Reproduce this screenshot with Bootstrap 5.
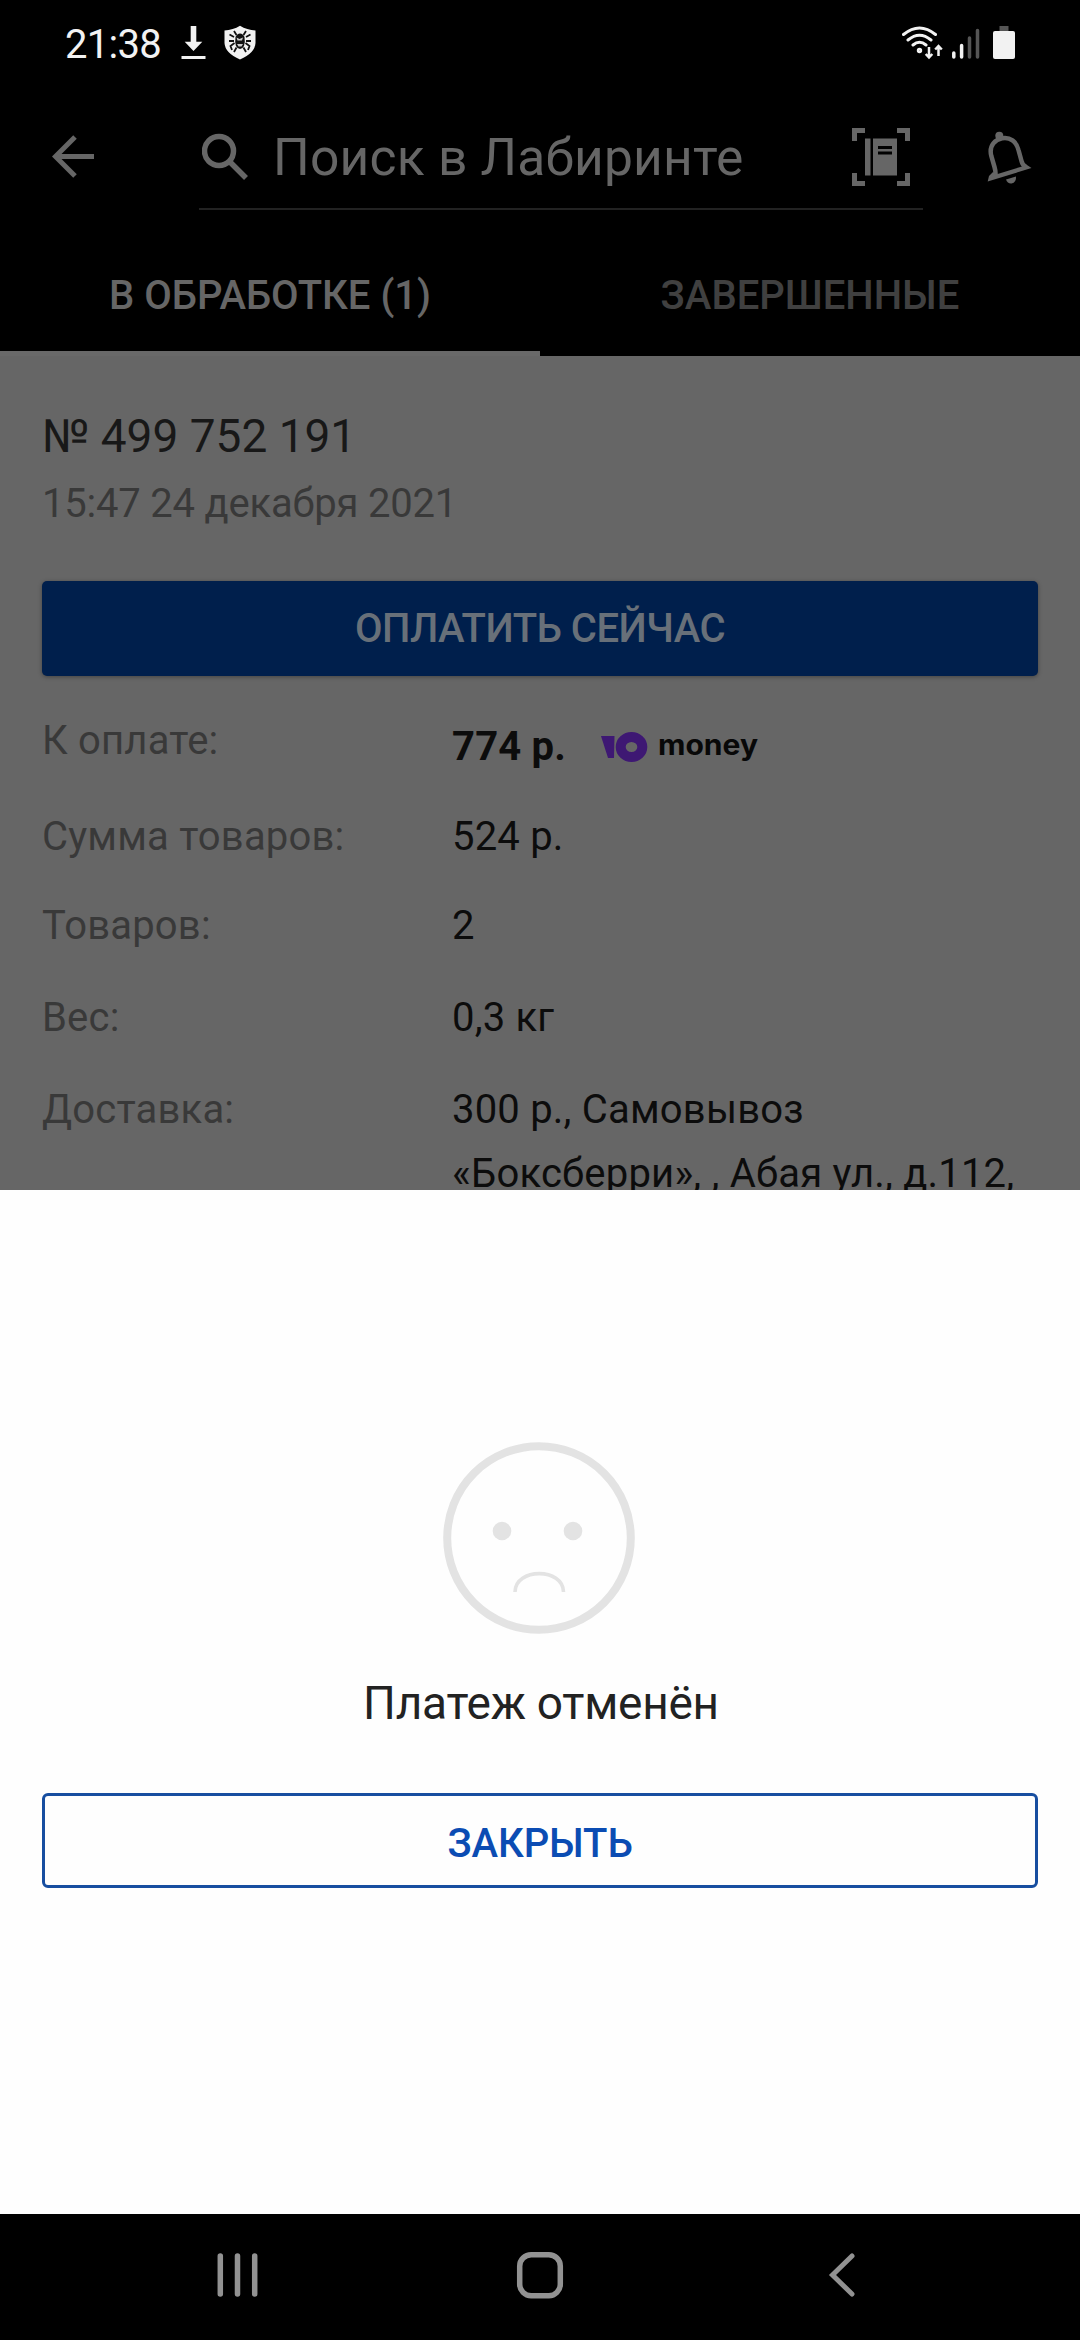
<!DOCTYPE html>
<html lang="ru">
<head>
<meta charset="utf-8">
<meta name="viewport" content="width=device-width, initial-scale=1">
<title>Заказы</title>
<link rel="stylesheet" href="https://cdn.jsdelivr.net/npm/bootstrap@5.3.0/dist/css/bootstrap.min.css">
<style>
body{font-family:Roboto,"Noto Sans",sans-serif;font-size:40px;line-height:64px;color:#0c0c0c;background:#000}
svg{display:block;flex:none}
.screen{width:1080px;height:2340px}
.status-bar{height:84px;padding:0 65px}
.clock-text{font-size:40px;line-height:60px;letter-spacing:-.7px;width:116px;margin-top:15px;color:#f2f2f2}
.top-bar{height:156px;color:#666}
.search-box{margin-left:104px;width:724px;height:126px;border-bottom:2px solid #222}
.search-label{font-size:51.5px;line-height:60px;margin:44px 0 0 24px;letter-spacing:.25px;white-space:nowrap}
.tab-item{width:540px;height:116px;font-weight:500;color:#404040;border-bottom:5px solid transparent;padding-top:24px}
.tab-item.current{color:#666;border-color:#696969}
.order-page{height:834px;background:#666;padding:0 42px}
.order-no{font-size:46px;line-height:60px;color:#181818;padding-top:50px}
.order-date{line-height:60px;color:#393939;margin-top:8px;letter-spacing:-.2px}
.pay-btn,.pay-btn:hover{height:95px;margin-top:47px;background:#001f4c;color:#687079;font-size:40px;font-weight:500;border:0;border-radius:5px;box-shadow:0 1px 4px rgba(0,0,0,.35);line-height:60px;letter-spacing:-.5px}
.order-row{height:92px;letter-spacing:.2px}
.row-name{width:410px;color:#393939}
.sheet{height:1024px;background:#fefefe;padding:252px 42px 0}
.sheet-text{font-size:46px;line-height:60px;color:#222;letter-spacing:-.25px;margin:39px 0 60px 2px}
.close-btn{height:95px;border:3px solid #174ea0;border-radius:6px;color:#0b4cb3;font-size:40px;font-weight:500;line-height:60px;background:#fefefe;padding:9px 0 3px;letter-spacing:-.1px}
.system-nav{height:126px;padding:0 0 4px 217px}
</style>
<script src="https://cdn.jsdelivr.net/npm/bootstrap@5.3.0/dist/js/bootstrap.bundle.min.js"></script>
</head>
<body>
<div class="screen d-flex flex-column overflow-hidden">
<header class="status-bar d-flex align-items-start">
  <div class="clock-text">21:38</div>
  <svg style="margin-top:26px" width="25" height="33" viewBox="0 0 25 33" fill="#f2f2f2"><path d="M9.700 0h5.600v15.700h6L12.500 25 3.700 15.700h6zM.5 30h24v3H.5z"/></svg>
  <svg style="margin:25px 0 0 18px" width="32" height="35" viewBox="0 0 32 35"><path d="M16 .7Q23 5 31.500 5.500V18Q31 28 16 34.500 1 28 .5 18V5.500Q9 5 16 .7z" fill="#f2f2f2"/><g stroke="#111" stroke-width="1.800" fill="none"><path d="M12.500 10L10 6M10 12L5.500 9.500M10 16H5M10.500 18L6.500 21 8 25M12.500 22.500L10 27M19.500 10L22 6M22 12L26.500 9.500M22 16H27M21.500 18L25.500 21 24 25M19.500 22.500L22 27"/></g><path d="M11.500 12q1.500-3.500 4.500-3.500t4.500 3.500q1.500 11-4.500 12-6-1-4.500-12z" fill="#111"/><path d="M12.500 12.500l3 1.500 3.500-1.500-1 3h-4.500zM13 19h6l-1.500 2.500h-3z" fill="#ccc"/></svg>
  <div class="ms-auto d-flex">
  <svg style="margin-top:25px" width="43" height="35" viewBox="0 0 43 35" fill="none" stroke="#f2f2f2" stroke-width="3" stroke-linecap="round"><path d="M2.500 9.500Q18.500-3.500 34.500 9.500M7 15Q18.500 5.500 30 15M12 20Q18.500 14.500 25 20"/><circle cx="18.500" cy="25.500" r="1.200"/><path d="M28 22v10M24.700 29l3.300 3.500 3.300-3.500M37.500 31V21M34.200 24.500l3.300-3.500 3.300 3.500" stroke-width="2.500" stroke-linecap="butt"/></svg>
  <svg style="margin:27px 0 0 7px" width="30" height="33" viewBox="0 0 30 33" stroke-width="3.500" stroke-linecap="round"><path d="M2.800 26v4M10.600 18.500V30" stroke="#f2f2f2"/><path d="M18.500 11v19M26.500 3.500V30" stroke="#555"/></svg>
  <svg style="margin:26px 0 0 12px" width="22" height="33" viewBox="0 0 22 33"><path d="M6.500 0h9v6h-9z" fill="#555"/><rect y="5" width="22" height="28" rx="2" fill="#f2f2f2"/></svg>
  </div>
</header>
<nav class="top-bar d-flex align-items-start">
  <svg style="margin:51px 0 0 52px" width="42" height="43" viewBox="0 0 42 43" fill="none" stroke="#666" stroke-width="5"><path d="M42 21.500H4M23 2L3.500 21.500 23 41"/></svg>
  <div class="search-box d-flex" style="margin-left:105px">
    <svg style="margin:49px 0 0 3px" width="47" height="48" viewBox="0 0 47 48" fill="none" stroke="#666" stroke-width="5.500"><circle cx="17" cy="18" r="14.500"/><path d="M28 29l16 16"/></svg>
    <div class="search-label">Поиск в Лабиринте</div>
    <svg class="ms-auto" style="margin-top:44px;margin-right:13px" width="58" height="58" viewBox="0 0 58 58" fill="#666"><path d="M0 0h13v5H5v8H0zM45 0h13v13h-5V5h-8zM0 45h5v8h8v5H0zM53 45h5v13H45v-5h8zM13 10.500h5.500v37H13z"/><path fill-rule="evenodd" d="M21 10.500h24v37H21zM26 18v3h14v-3zM26 23.500v3h14v-3z"/></svg>
  </div>
  <svg style="margin:47px 0 0 64px" width="46" height="53" viewBox="0 0 46 53" fill="none" stroke="#666" stroke-width="4.500"><path d="M8.500 46Q9 41 7.500 36L4.300 25C1.500 14 9 8.500 15 7.300 23 5.800 29.500 10.500 31.500 19L34.500 30Q35.500 34.500 39 36"/><path d="M.7 50.500L2 45 6 41 9 43.500 35 35.500 37 32 44.500 37z" fill="#666" stroke="none"/><circle cx="12.300" cy="4.800" r="4" fill="#666" stroke="none"/><path d="M19 48.500l10-3q.5 6-4.500 7-4 .3-5.500-4z" fill="#666" stroke="none"/></svg>
</nav>
<div class="d-flex text-center">
  <div class="tab-item current">В ОБРАБОТКЕ (1)</div>
  <div class="tab-item">ЗАВЕРШЕННЫЕ</div>
</div>
<main class="order-page overflow-hidden flex-shrink-0">
  <div class="order-no">№ 499 752 191</div>
  <div class="order-date">15:47 24 декабря 2021</div>
  <button class="btn pay-btn w-100 d-block">ОПЛАТИТЬ СЕЙЧАС</button>
  <div class="order-row d-flex" style="margin-top:33px;height:96px"><div class="row-name">К оплате:</div><div class="fw-bold" style="padding-top:6px">774 р.</div>
    <svg style="margin:23px 0 0 35px" width="170" height="50" viewBox="0 0 170 50" overflow="visible"><path d="M0 4h13.500l-.5 22H7z" fill="#3e1873"/><ellipse cx="30.500" cy="15" rx="10.800" ry="10" fill="none" stroke="#3e1873" stroke-width="10"/><text x="57" y="22.500" textLength="100" lengthAdjust="spacingAndGlyphs" font-family="Inter,sans-serif" font-weight="700" font-size="28" fill="#080808" letter-spacing="0">money</text></svg>
  </div>
  <div class="order-row d-flex" style="height:89px"><div class="row-name">Сумма товаров:</div><div>524 р.</div></div>
  <div class="order-row d-flex"><div class="row-name">Товаров:</div><div>2</div></div>
  <div class="order-row d-flex"><div class="row-name">Вес:</div><div>0,3 кг</div></div>
  <div class="order-row d-flex"><div class="row-name">Доставка:</div><div class="text-nowrap">300 р., Самовывоз<br>«Боксберри», , Абая ул., д.112,</div></div>
</main>
<section class="sheet d-flex flex-column align-items-center flex-shrink-0">
  <svg style="margin-right:2px" width="192" height="192" viewBox="0 0 192 192" fill="none" stroke="#e3e3e3"><circle cx="96" cy="96" r="91.800" stroke-width="8"/><g fill="#e3e3e3" stroke="none"><circle cx="59" cy="89" r="9.300"/><circle cx="130" cy="89" r="9.300"/></g><path d="M72 150C72 125.500 120.500 125.500 120.500 150" stroke-width="3.600"/></svg>
  <div class="sheet-text">Платеж отменён</div>
  <button class="btn close-btn w-100">ЗАКРЫТЬ</button>
</section>
<footer class="system-nav d-flex align-items-center flex-shrink-0">
  <svg width="41" height="44" viewBox="0 0 41 44" stroke="#929292" stroke-width="5.500" stroke-linecap="round"><path d="M3.300 3v38M20.500 3v38M37.700 3v38"/></svg>
  <svg style="margin-left:258px" width="48" height="48" viewBox="0 0 48 48" fill="none" stroke="#929292" stroke-width="5.500"><rect x="3.700" y="3.700" width="40.600" height="41" rx="11.500"/></svg>
  <svg style="margin-left:264px" width="28" height="44" viewBox="0 0 28 44" fill="none" stroke="#929292" stroke-width="5" stroke-linecap="round"><path d="M24 3L4.500 22 24 41"/></svg>
</footer>
</div>
</body>
</html>
